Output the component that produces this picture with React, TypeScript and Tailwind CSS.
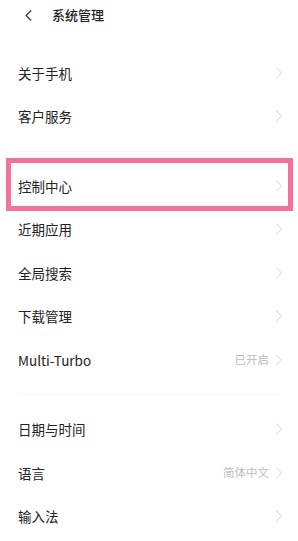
import { ChevronLeft } from 'lucide-react';

type Row = {
    label: string;
    value?: string;
    highlight?: boolean;
};

const groups: Row[][] = [
    [{ label: '关于手机' }, { label: '客户服务' }],
    [
        { label: '控制中心', highlight: true },
        { label: '近期应用' },
        { label: '全局搜索' },
        { label: '下载管理' },
        { label: 'Multi-Turbo', value: '已开启' },
    ],
    [{ label: '日期与时间' }, { label: '语言', value: '简体中文' }, { label: '输入法' }],
];

function Chevron() {
    return (
        <svg width="8" height="12" viewBox="0 0 8 12" fill="none" className="shrink-0">
            <path d="M1.5 1L6.5 6L1.5 11" stroke="#d2d2d2" strokeWidth="1" strokeLinecap="round" strokeLinejoin="round" />
        </svg>
    );
}

function SettingRow({ row }: { row: Row }) {
    return (
        <div className="relative flex h-[43.5px] items-center justify-between pl-[18px] pr-[15px]">
            <span className="text-[13.5px] text-[#222]">{row.label}</span>
            <div className="flex items-center gap-[6px]">
                {row.value && <span className="text-[11.5px] text-[#bcbcbc]">{row.value}</span>}
                <Chevron />
            </div>
            {row.highlight && (
                <div className="pointer-events-none absolute left-[6px] right-[5px] top-[-6px] bottom-[-3px] border-[5px] border-[#f4719b]" />
            )}
        </div>
    );
}

export default function App() {
    return (
        <div
            className="flex h-[541px] w-[298px] flex-col overflow-hidden bg-white"
            style={{ fontFamily: '"Noto Sans CJK SC", "Noto Sans", sans-serif' }}
        >
            <div className="flex h-[30px] items-center pl-[19px]">
                <ChevronLeft size={19} strokeWidth={1.4} className="text-[#333]" />
                <span className="ml-[14px] text-[13px] font-medium text-[#222]">系统管理</span>
            </div>

            <div className="pt-[21px]">
                {groups.map((group, i) => (
                    <div key={i}>
                        {i > 0 && (
                            <div className="flex h-[26px] items-center px-[18px]">
                                <div className="h-px w-full bg-[#f6f6f6]" />
                            </div>
                        )}
                        {group.map((row) => (
                            <SettingRow key={row.label} row={row} />
                        ))}
                    </div>
                ))}
            </div>
        </div>
    );
}
